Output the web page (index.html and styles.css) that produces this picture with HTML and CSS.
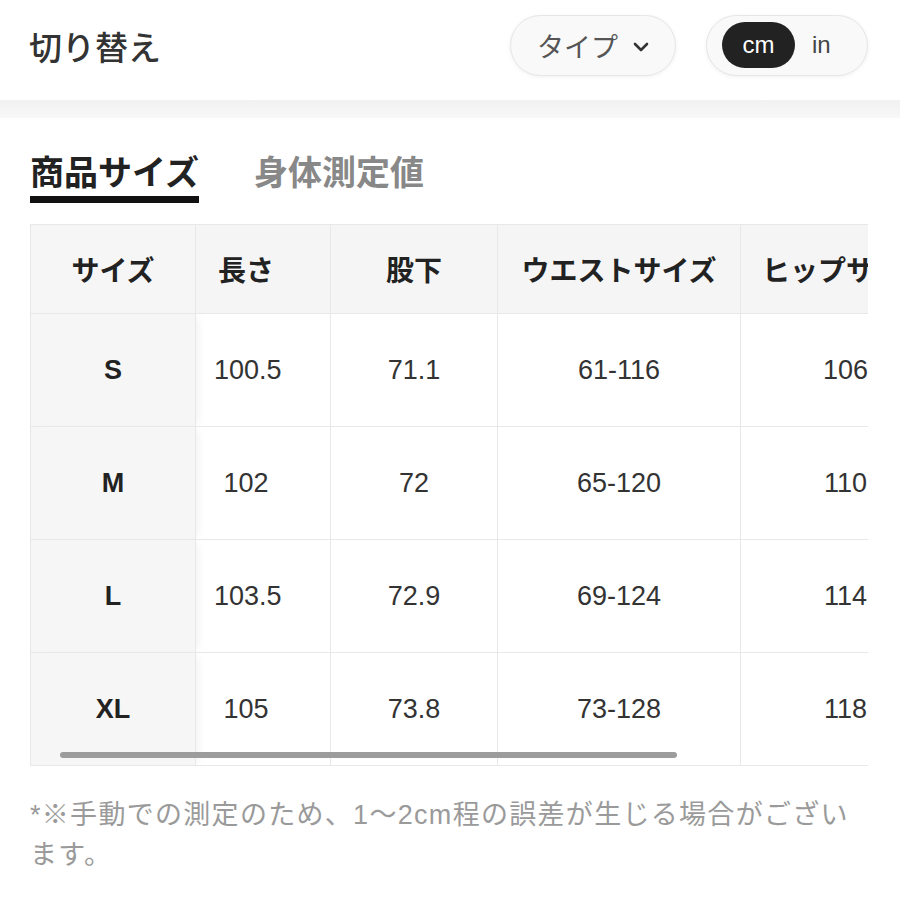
FILE: index.html
```html
<!DOCTYPE html>
<html lang="ja">
<head>
<meta charset="utf-8">
<title>サイズ表</title>
<link rel="stylesheet" href="styles.css">
</head>
<body>
<header class="topbar">
  <h1 class="title">切り替え</h1>
  <div class="controls">
    <button class="pill type-pill">
      <span>タイプ</span>
      <svg class="chev" width="16" height="10" viewBox="0 0 16 10"><path d="M2 2 L8 8 L14 2" fill="none" stroke="#333" stroke-width="2.6" stroke-linecap="round" stroke-linejoin="round"/></svg>
    </button>
    <div class="pill unit-pill">
      <span class="unit active">cm</span>
      <span class="unit">in</span>
    </div>
  </div>
</header>
<div class="band"></div>
<nav class="tabs">
  <div class="tab active">商品サイズ</div>
  <div class="tab">身体測定値</div>
</nav>
<div class="scroller">
  <table class="sizes">
    <colgroup>
      <col class="c-size"><col class="c-len"><col class="c-inseam"><col class="c-waist"><col class="c-hip">
    </colgroup>
    <thead>
      <tr>
        <th class="size">サイズ</th>
        <th class="len">長さ</th>
        <th>股下</th>
        <th>ウエストサイズ</th>
        <th>ヒップサイズ</th>
      </tr>
    </thead>
    <tbody>
      <tr><td class="size">S</td><td class="len">100.5</td><td>71.1</td><td>61-116</td><td>106</td></tr>
      <tr><td class="size">M</td><td class="len">102</td><td>72</td><td>65-120</td><td>110</td></tr>
      <tr><td class="size">L</td><td class="len">103.5</td><td>72.9</td><td>69-124</td><td>114</td></tr>
      <tr><td class="size">XL</td><td class="len">105</td><td>73.8</td><td>73-128</td><td>118</td></tr>
    </tbody>
  </table>
  <div class="scrollbar"></div>
</div>
<p class="note">*※手動での測定のため、1〜2cm程の誤差が生じる場合がございます。</p>
</body>
</html>
```
FILE: styles.css
```css
* { box-sizing: border-box; }
body {
  margin: 0;
  background: #fff;
  font-family: "Liberation Sans", "Noto Sans CJK JP", sans-serif;
  color: #333;
}
.topbar {
  height: 100px;
  display: flex;
  align-items: center;
  justify-content: space-between;
  padding: 0 32px 0 29px;
}
.title {
  margin: 0;
  font-size: 33px;
  font-weight: 500;
  color: #333;
  font-family: "Noto Sans CJK JP", sans-serif;
  position: relative;
  top: -4px;
}
.controls {
  display: flex;
  gap: 30px;
  align-items: center;
  position: relative;
  top: -5px;
}
.pill {
  height: 61px;
  border: 1px solid #e6e6e6;
  border-radius: 31px;
  background: #f9f9f9;
  box-shadow: 0 1px 4px rgba(0,0,0,0.06);
  display: flex;
  align-items: center;
}
.type-pill {
  width: 166px;
  justify-content: center;
  gap: 15px;
  font-family: "Noto Sans CJK JP", sans-serif;
  font-size: 27px;
  color: #555;
  padding: 0;
}
.chev { margin-top: 3px; }
.unit-pill {
  width: 162px;
  padding: 0 15px;
  gap: 17px;
}
.unit {
  font-size: 24px;
  color: #444;
  line-height: 1;
}
.unit.active {
  background: #222;
  color: #fff;
  width: 73px;
  height: 46px;
  border-radius: 23px;
  display: flex;
  align-items: center;
  justify-content: center;
}
.band {
  height: 18px;
  background: linear-gradient(#f1f1f1, #f8f8f8);
}
.tabs {
  display: flex;
  gap: 55px;
  padding: 0 30px;
  margin-top: 28px;
}
.tab {
  font-family: "Noto Sans CJK JP", sans-serif;
  font-size: 34px;
  font-weight: 700;
  line-height: 50px;
  color: #888;
  border-bottom: 7px solid transparent;
}
.tab.active {
  color: #222;
  border-bottom-color: #111;
}
.scroller {
  position: relative;
  margin: 21px 0 0 30px;
  width: 838px;
  overflow: hidden;
}
.sizes {
  table-layout: fixed;
  border-collapse: collapse;
  width: 920px;
}
.c-size { width: 165px; }
.c-len { width: 135px; }
.c-inseam { width: 167px; }
.c-waist { width: 243px; }
.c-hip { width: 210px; }
.sizes th, .sizes td {
  border: 1px solid #e8e8e8;
  text-align: center;
  padding: 0;
}
.sizes th {
  height: 89px;
  background: #f5f5f5;
  font-family: "Noto Sans CJK JP", sans-serif;
  font-size: 28px;
  font-weight: 700;
  color: #222;
}
.sizes td {
  height: 113px;
  font-size: 27px;
  color: #333;
}
.sizes .size {
  background: #f6f6f6;
  font-weight: 700;
  color: #222;
  box-shadow: 6px 0 8px -4px rgba(0,0,0,0.06);
}
.sizes td.size { font-family: "Liberation Sans", sans-serif; }
.sizes .len { padding: 0 52px 0 18px; }
.scrollbar {
  position: absolute;
  left: 30px;
  bottom: 8px;
  width: 617px;
  height: 6px;
  border-radius: 3px;
  background: #9c9c9c;
}
.note {
  margin: 29px 42px 0 30px;
  font-size: 27px;
  letter-spacing: 1.3px;
  line-height: 40px;
  color: #9a9a9a;
}
```
